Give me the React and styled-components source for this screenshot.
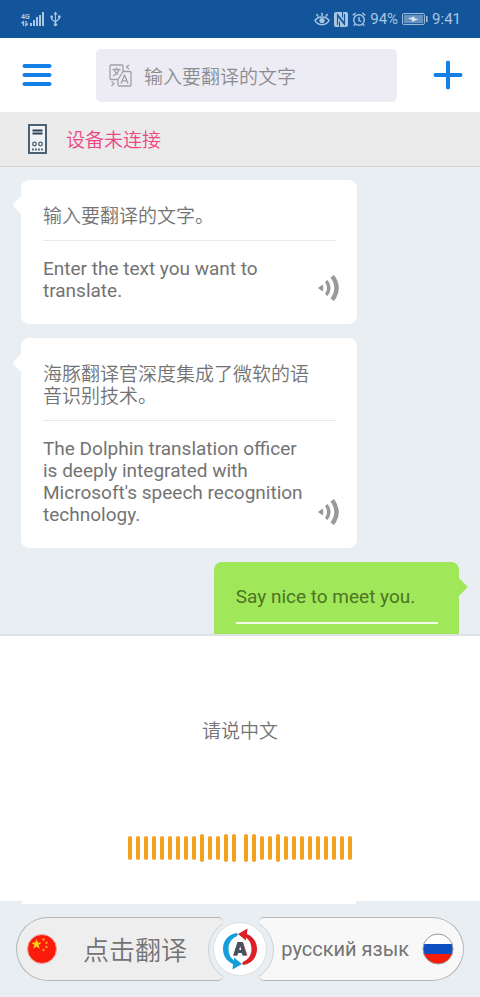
import React, { useState } from 'react'
import styled, { createGlobalStyle, css } from 'styled-components'

const GlobalStyle = createGlobalStyle`
    * {
        box-sizing: border-box;
    }
    body {
        margin: 0;
        font-family: Roboto, 'Noto Sans CJK SC', sans-serif;
        font-size: 19px;
        line-height: 22px;
        color: #737373;
    }
    button {
        border: none;
        padding: 0;
        background: none;
        font: inherit;
        color: inherit;
        cursor: pointer;
    }
    svg {
        display: block;
        flex: none;
    }
`

const chinese = css`
    font-family: 'Noto Sans CJK SC', sans-serif;
    font-weight: 350;
`

const Screen = styled.div`
    display: flex;
    flex-direction: column;
    height: 100vh;
    background-color: #e8eef2;
`

const StatusBar = styled.div`
    display: flex;
    align-items: center;
    justify-content: space-between;
    flex: none;
    height: 38px;
    padding: 0 19px 0 21px;
    background-color: #12559a;
    color: #a9c6e2;
    font-size: 15px;
`

const StatusGroup = styled.div`
    display: flex;
    align-items: center;
    gap: 4px;
`

const Signal = styled.div`
    display: flex;
    align-items: flex-end;
`

const Network = styled.div`
    font-size: 7px;
    font-weight: 700;
    line-height: 8px;
`

const Header = styled.header`
    display: flex;
    align-items: center;
    flex: none;
    height: 74px;
    padding: 0 17px 0 22px;
    background-color: white;
`

const SearchBox = styled.label`
    display: flex;
    align-items: center;
    flex: 1;
    gap: 12px;
    min-width: 0;
    height: 53px;
    margin: 0 36px 0 44px;
    padding: 0 13px;
    border-radius: 5px;
    background-color: #edecf5;
`

const SearchInput = styled.input`
    flex: 1;
    min-width: 0;
    padding: 0;
    border: none;
    outline: none;
    background: none;
    font-size: 19px;
    color: #737373;
    ${chinese}

    &::placeholder {
        color: #8c8c90;
        opacity: 1;
    }
`

const DeviceBar = styled.div`
    display: flex;
    align-items: center;
    flex: none;
    gap: 19px;
    height: 55px;
    padding: 0 28px;
    border-bottom: 1px solid #d3d5d6;
    background-color: #ebebeb;
    color: #f04585;
    ${chinese}
`

const Chat = styled.main`
    display: flex;
    flex-direction: column;
    align-items: flex-start;
    flex: 1;
    gap: 14px;
    min-height: 0;
    padding: 13px 21px 0;
    overflow: hidden;
`

const Bubble = styled.article`
    position: relative;
    flex: none;
    width: ${props => props.$mine ? '56%' : '336px'};
    max-width: 100%;
    padding: 24px 21px 22px 22px;
    border-radius: 8px;
    background-color: ${props => props.$mine ? '#a0e75a' : 'white'};
    color: ${props => props.$mine ? '#4c7423' : '#737373'};
    ${props => props.$mine && css`
        align-self: flex-end;
    `}

    &::before {
        content: '';
        position: absolute;
        top: 18px;
        ${props => props.$mine ? 'right' : 'left'}: -6px;
        width: 14px;
        height: 14px;
        border-radius: 2px;
        background-color: inherit;
        transform: rotate(45deg);
    }
`

const Line = styled.p`
    margin: 0;
    padding-right: ${props => props.$mine ? '0' : '26px'};
    ${props => props.$chinese && chinese}
`

const Divider = styled.hr`
    height: ${props => props.$mine ? '2px' : '1px'};
    margin: 14px 0 17px;
    border: none;
    background-color: ${props => props.$mine ? '#f1fbe8' : '#e6eaed'};
`

const PlayButton = styled.button`
    position: absolute;
    right: 17px;
    bottom: 22px;
`

const VoicePanel = styled.section`
    position: relative;
    display: flex;
    flex-direction: column;
    align-items: center;
    flex: none;
    gap: 93px;
    padding: 83px 0 39px;
    border-top: 2px solid #e0e1e2;
    background-color: white;
    ${chinese}

    &::after {
        content: '';
        position: absolute;
        top: 100%;
        left: 22px;
        width: 334px;
        height: 3px;
        background-color: white;
    }
`

const Wave = styled.div`
    display: flex;
    gap: 8px;
`

const WaveHalf = styled.div`
    display: flex;
    align-items: center;
    gap: 4px;
    height: 28px;
`

const WaveBar = styled.span`
    width: 4px;
    height: ${props => props.$tall ? '28px' : '24px'};
    border-radius: 2px;
    background-color: #f3a11b;
`

const Footer = styled.footer`
    position: relative;
    display: flex;
    flex: none;
    gap: 36px;
    padding: 16px;
`

const LanguageButton = styled.button`
    position: relative;
    display: flex;
    align-items: center;
    flex: 1;
    height: 64px;
    overflow: hidden;
    white-space: nowrap;

    &::after {
        content: '';
        position: absolute;
        top: 0;
        width: 62px;
        height: 62px;
        border: 1px solid #cdd0d3;
        border-radius: 50%;
        background-color: #e8eef2;
    }
`

const SourceButton = styled(LanguageButton)`
    gap: 26px;
    padding-left: 10px;
    border: 1px solid #b5b7b9;
    border-right: none;
    border-radius: 32px 5px 5px 32px;
    background-color: #eeeeee;
    font-size: 26px;
    ${chinese}

    &::after {
        right: -49px;
    }
`

const TargetButton = styled(LanguageButton)`
    justify-content: flex-end;
    gap: 13px;
    padding-right: 9px;
    border: 1px solid #b5b7b9;
    border-left: none;
    border-radius: 5px 32px 32px 5px;
    background-color: #f8f8f8;
    font-size: 20px;

    &::after {
        left: -49px;
    }
`

const SwapButton = styled.button`
    position: absolute;
    top: 50%;
    left: 50%;
    display: flex;
    align-items: center;
    justify-content: center;
    width: 54px;
    height: 54px;
    border: 1px solid #dcdfe2;
    border-radius: 50%;
    background-color: white;
    transform: translate(-50%, -50%);
`

const SignalIcon = () => (
    <svg width='16' height='16' viewBox='0 0 16 16' fill='#a9c6e2'>
        <rect x='0' y='12' width='2' height='3' />
        <rect x='3' y='9' width='2' height='6' />
        <rect x='6' y='6' width='2' height='9' />
        <rect x='9' y='4' width='2' height='11' />
        <rect x='12' y='1' width='2' height='14' />
    </svg>
)

const DataIcon = () => (
    <svg width='8' height='6' viewBox='0 0 8 6' fill='none' stroke='#a9c6e2' strokeWidth='1.3'>
        <path d='M2.5 5V.5L.5 2.500M5 0v4.500l2-2' />
    </svg>
)

const UsbIcon = () => (
    <svg width='11' height='16' viewBox='0 0 11 16' fill='none' stroke='#a9c6e2' strokeWidth='1.2'>
        <path d='M5.5 3v10M1.7 6v2.2l3.8 3M9.3 6v1.7l-3.8 3' />
        <path d='M3.5 3.5l2-3 2 3z' fill='#a9c6e2' stroke='none' />
        <circle cx='5.5' cy='13.6' r='1.7' fill='#a9c6e2' stroke='none' />
        <circle cx='1.7' cy='6' r='1.4' fill='#a9c6e2' stroke='none' />
        <rect x='8' y='4.5' width='2.6' height='2.6' fill='#a9c6e2' stroke='none' />
    </svg>
)

const EyeIcon = () => (
    <svg width='16' height='14' viewBox='0 0 16 14' fill='none' stroke='#a9c6e2' strokeWidth='1.5'>
        <path d='M1 8.5C4 3.8 12 3.8 15 8.5 12 14 4 14 1 8.5zM8 4V.8M4.2 4.6L2.5 2M11.8 4.6L13.5 2' />
        <circle cx='8' cy='8.6' r='2.6' fill='#a9c6e2' stroke='none' />
    </svg>
)

const NfcIcon = () => (
    <svg width='14' height='15' viewBox='0 0 14 15'>
        <rect x='0' y='0' width='14' height='15' rx='2' fill='#a9c6e2' />
        <path d='M3.500 13V2.500l6.500 8M10.500 2v10.500L4 4.500' fill='none' stroke='#12559a' strokeWidth='1.100' />
        <path d='M5.500 15V9.500M8.500 0v5.500' stroke='#12559a' strokeWidth='1' />
    </svg>
)

const AlarmIcon = () => (
    <svg width='14' height='15' viewBox='0 0 14 15' fill='none' stroke='#a9c6e2' strokeWidth='1.4'>
        <circle cx='7' cy='8' r='5.3' />
        <path d='M7 5v3.300l2 1.500M.8 3.400L3.600 1M13.200 3.400L10.400 1M3 12.200l-1.300 1.500M11 12.200l1.300 1.500' />
    </svg>
)

const BatteryIcon = () => (
    <svg width='26' height='12' viewBox='0 0 26 12' fill='none'>
        <rect x='.6' y='.6' width='21.8' height='10.8' rx='1' stroke='#a9c6e2' />
        <rect x='2' y='2' width='19' height='8' fill='#6592bf' />
        <path d='M6 5.500l6.500-2v2l4 .5-6.500 3v-2.200z' fill='#dbe8f4' />
        <rect x='24' y='3' width='1.500' height='6' fill='#a9c6e2' />
    </svg>
)

const MenuIcon = () => (
    <svg width='30' height='24' viewBox='0 0 30 24' stroke='#1380e8' strokeWidth='4' strokeLinecap='round'>
        <path d='M2.500 3h25M2.500 12h25M2.500 21h25' />
    </svg>
)

const PlusIcon = () => (
    <svg width='30' height='30' viewBox='0 0 30 30' stroke='#1380e8' strokeWidth='4' strokeLinecap='round'>
        <path d='M2.500 15h25M15 2.500v25' />
    </svg>
)

const TranslateIcon = () => (
    <svg width='23' height='23' viewBox='0 0 23 23' fill='none' stroke='#a0a0a4' strokeWidth='1.3' strokeLinejoin='round'>
        <path d='M8.500 15.500H2q-1 0-1-1V2q0-1 1-1h11q1 0 1 1v5.500' />
        <path d='M14 7.500h7q1 0 1 1V21q0 1-1 1H10q-1 0-1-1v-5.500z' />
        <path d='M3.500 5.500h8M7.500 3.500v2M10 5.500Q8.500 10 4 11.800M5 5.500q1 3 4 5' />
        <path d='M12 19.500l3.500-8.500 3.500 8.500M13.200 16.800h4.600' />
        <path d='M20 1l-2.500 2L20 5M2.500 17.500L5 19.500 2.500 22' />
    </svg>
)

const DeviceIcon = () => (
    <svg width='19' height='30' viewBox='0 0 19 30' fill='none' stroke='#4b6172'>
        <rect x='1' y='1' width='17' height='28' strokeWidth='2' fill='#f0f3f5' />
        <path d='M4.500 6.500h10M4.500 9.500h10' stroke='#2c4152' strokeWidth='2' />
        <circle cx='6.500' cy='20' r='1.800' strokeWidth='1.300' />
        <circle cx='12.500' cy='20' r='1.800' strokeWidth='1.300' />
        <path d='M4 25.500h11' strokeWidth='2' strokeDasharray='1.800 1.200' />
    </svg>
)

const SoundIcon = () => (
    <svg width='22' height='28' viewBox='0 0 22 28' fill='none' stroke='#999999'>
        <path d='M0 14l4.600-3.400q1.600 3.400 0 6.800z' fill='#999999' stroke='none' />
        <path d='M8.300 7q5 7 0 14' strokeWidth='3.400' />
        <path d='M14.300 2.300q8.500 11.700 0 23.400' strokeWidth='4.400' />
    </svg>
)

const ChinaFlag = () => (
    <svg width='30' height='30' viewBox='0 0 30 30'>
        <circle cx='15' cy='15' r='14.5' fill='#fb1b0b' stroke='#e9aaa5' />
        <path d='M9.500 5l1.300 3.600 3.900.1-3.100 2.400 1.100 3.700-3.200-2.200-3.200 2.200 1.100-3.700-3.100-2.400 3.900-.1z' fill='#ffd21c' />
        <g fill='#f9a21b'>
            <circle cx='16.5' cy='5.5' r='1.2' />
            <circle cx='19.5' cy='8.8' r='1.2' />
            <circle cx='19.5' cy='13' r='1.2' />
            <circle cx='16.5' cy='16' r='1.2' />
        </g>
    </svg>
)

const RussiaFlag = () => (
    <svg width='32' height='32' viewBox='0 0 32 32'>
        <defs>
            <clipPath id='round-flag'>
                <circle cx='16' cy='16' r='15' />
            </clipPath>
        </defs>
        <g clipPath='url(#round-flag)'>
            <rect width='32' height='11' fill='white' />
            <rect y='11' width='32' height='10' fill='#0f4fc4' />
            <rect y='21' width='32' height='11' fill='#fb1b0b' />
        </g>
        <circle cx='16' cy='16' r='15' fill='none' stroke='#96989c' />
    </svg>
)

const SwapIcon = () => (
    <svg width='36' height='42' viewBox='0 0 36 42' fill='none'>
        <path d='M14.500 5C6 6.500 1 13 1 21c0 7 4 12.500 10 15l-.5 5.500L20 36l-8-6.500v3C8.500 30 6.500 26 6.500 21c0-6 3-10.500 8-12.500l1.500-2z' fill='#149fdb' />
        <path d='M21.500 37C30 35.500 35 29 35 21c0-7-4-12.500-10-15l.5-5.500L16 6l8 6.500v-3c3.500 2.500 5.500 6.500 5.500 11.500 0 6-3 10.500-8 12.500l-1.500 2z' fill='#dc2029' />
        <path d='M16 14h5l4.500 13.500h-4l-.8-2.500h-4.400l-.8 2.500h-4zM18.500 17.500l-1.300 4.500h2.600z' fill='#c2525a' />
        <path d='M15.500 14h5L24.500 27.500h-4l-.8-2.500h-3.800l-.8 2.500h-4zM18 17.500l-1.300 4.500h2.600z' fill='#45525e' fillRule='evenodd' />
    </svg>
)

const messages = [
    { id: 1, source: '输入要翻译的文字。', result: 'Enter the text you want to translate.' },
    {
        id: 2,
        source: '海豚翻译官深度集成了微软的语音识别技术。',
        result: "The Dolphin translation officer is deeply integrated with Microsoft's speech recognition technology."
    },
    { id: 3, source: 'Say nice to meet you.', mine: true }
]

const BAR_COUNT = 14

const Message = ({ item }) => (
    <Bubble $mine={item.mine}>
        <Line $mine={item.mine} $chinese={!item.mine}>{item.source}</Line>
        <Divider $mine={item.mine} />
        {item.result && <Line>{item.result}</Line>}
        {item.result && (
            <PlayButton aria-label='播放'>
                <SoundIcon />
            </PlayButton>
        )}
    </Bubble>
)

const renderBars = (tall) => {
    return Array.from({ length: BAR_COUNT }, (_, i) => <WaveBar key={i} $tall={tall.includes(i)} />)
}

const App = () => {
    const [text, setText] = useState('')

    return (
        <Screen>
            <GlobalStyle />
            <StatusBar>
                <StatusGroup>
                    <Signal>
                        <Network>
                            4G
                            <DataIcon />
                        </Network>
                        <SignalIcon />
                    </Signal>
                    <UsbIcon />
                </StatusGroup>
                <StatusGroup>
                    <EyeIcon />
                    <NfcIcon />
                    <AlarmIcon />
                    <span>94%</span>
                    <BatteryIcon />
                    <span>9:41</span>
                </StatusGroup>
            </StatusBar>

            <Header>
                <button aria-label='菜单'><MenuIcon /></button>
                <SearchBox>
                    <TranslateIcon />
                    <SearchInput
                        type='text'
                        aria-label='输入要翻译的文字'
                        placeholder='输入要翻译的文字'
                        value={text}
                        onChange={(e) => setText(e.target.value)}
                    />
                </SearchBox>
                <button aria-label='添加'><PlusIcon /></button>
            </Header>

            <DeviceBar>
                <DeviceIcon />
                <span>设备未连接</span>
            </DeviceBar>

            <Chat>
                {messages.map(item => <Message key={item.id} item={item} />)}
            </Chat>

            <VoicePanel>
                <span>请说中文</span>
                <Wave>
                    <WaveHalf>{renderBars([9, 12, 13])}</WaveHalf>
                    <WaveHalf>{renderBars([0, 1, 4])}</WaveHalf>
                </Wave>
            </VoicePanel>

            <Footer>
                <SourceButton>
                    <ChinaFlag />
                    <span>点击翻译</span>
                </SourceButton>
                <TargetButton>
                    <span>русский язык</span>
                    <RussiaFlag />
                </TargetButton>
                <SwapButton aria-label='切换语言'>
                    <SwapIcon />
                </SwapButton>
            </Footer>
        </Screen>
    )
}

export default App
